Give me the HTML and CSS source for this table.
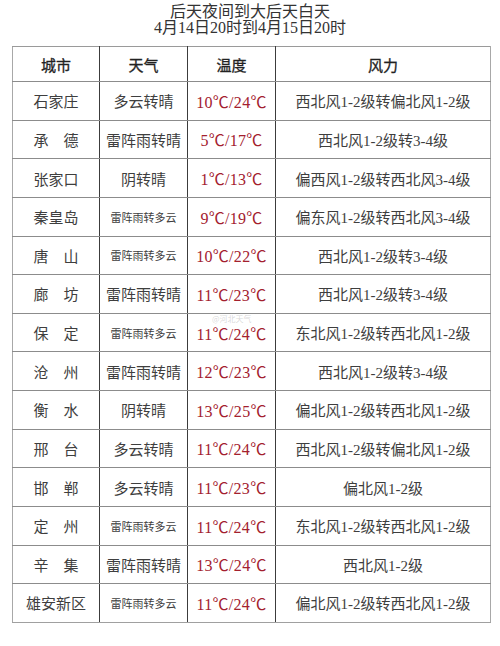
FILE: index.html
```html
<!DOCTYPE html>
<html lang="zh">
<head>
<meta charset="utf-8">
<title>后天夜间到大后天白天</title>
<link rel="stylesheet" href="styles.css">
</head>
<body>
<div class="page">
  <div class="title">
    <div>后天夜间到大后天白天</div>
    <div>4月14日20时到4月15日20时</div>
  </div>
  <div class="wrap">
    <table class="wx">
      <colgroup>
        <col class="c1"><col class="c2"><col class="c3"><col class="c4">
      </colgroup>
      <thead>
        <tr><th>城市</th><th>天气</th><th>温度</th><th>风力</th></tr>
      </thead>
      <tbody>
        <tr><td>石家庄</td><td>多云转晴</td><td class="t">10℃/24℃</td><td>西北风1-2级转偏北风1-2级</td></tr>
        <tr><td>承　德</td><td>雷阵雨转晴</td><td class="t">5℃/17℃</td><td>西北风1-2级转3-4级</td></tr>
        <tr><td>张家口</td><td>阴转晴</td><td class="t">1℃/13℃</td><td>偏西风1-2级转西北风3-4级</td></tr>
        <tr><td>秦皇岛</td><td class="s">雷阵雨转多云</td><td class="t">9℃/19℃</td><td>偏东风1-2级转西北风3-4级</td></tr>
        <tr><td>唐　山</td><td class="s">雷阵雨转多云</td><td class="t">10℃/22℃</td><td>西北风1-2级转3-4级</td></tr>
        <tr><td>廊　坊</td><td>雷阵雨转晴</td><td class="t">11℃/23℃</td><td>西北风1-2级转3-4级</td></tr>
        <tr><td>保　定</td><td class="s">雷阵雨转多云</td><td class="t">11℃/24℃</td><td>东北风1-2级转西北风1-2级</td></tr>
        <tr><td>沧　州</td><td>雷阵雨转晴</td><td class="t">12℃/23℃</td><td>西北风1-2级转3-4级</td></tr>
        <tr><td>衡　水</td><td>阴转晴</td><td class="t">13℃/25℃</td><td>偏北风1-2级转西北风1-2级</td></tr>
        <tr><td>邢　台</td><td>多云转晴</td><td class="t">11℃/24℃</td><td>西北风1-2级转偏北风1-2级</td></tr>
        <tr><td>邯　郸</td><td>多云转晴</td><td class="t">11℃/23℃</td><td>偏北风1-2级</td></tr>
        <tr><td>定　州</td><td class="s">雷阵雨转多云</td><td class="t">11℃/24℃</td><td>东北风1-2级转西北风1-2级</td></tr>
        <tr><td>辛　集</td><td>雷阵雨转晴</td><td class="t">13℃/24℃</td><td>西北风1-2级</td></tr>
        <tr><td>雄安新区</td><td class="s">雷阵雨转多云</td><td class="t">11℃/24℃</td><td>偏北风1-2级转西北风1-2级</td></tr>
      </tbody>
    </table>
    <div class="mark">@河北天气</div>
  </div>
</div>
</body>
</html>
```

FILE: styles.css
```css
html, body {
  margin: 0;
  padding: 0;
  background: #ffffff;
}
body {
  font-family: "Liberation Serif", "Noto Sans CJK SC", serif;
  color: #3e3e3e;
}
.page {
  width: 500px;
  padding-top: 4px;
}
.title {
  text-align: center;
  font-size: 16px;
  line-height: 16px;
  color: #333;
}
.wrap {
  position: relative;
  margin: 10px 10px 0 12px;
}
.wx {
  width: 478px;
  border-collapse: collapse;
  table-layout: fixed;
  border-left: 1px solid #a8a8a8;
  border-right: 1px solid #a8a8a8;
}
.c1 { width: 87px; }
.c2 { width: 88px; }
.c3 { width: 88px; }
.c4 { width: 215px; }
.wx th, .wx td {
  text-align: center;
  vertical-align: middle;
  padding: 0;
  border-top: 1px solid #8c8c8c;
  border-bottom: 1px solid #8c8c8c;
  border-left: 1px solid #3c3c3c;
  border-right: 1px solid #3c3c3c;
  white-space: nowrap;
}
.wx th:first-child, .wx td:first-child { border-left: 1px solid #a8a8a8; }
.wx th:last-child, .wx td:last-child { border-right: 1px solid #a8a8a8; }
.wx thead tr { height: 35px; }
.wx thead th {
  border-top: 1px solid #9a9a9a;
  font-weight: normal;
  font-size: 15px;
  color: #222;
  -webkit-text-stroke: 0.3px #222;
}
.wx tbody tr { height: 38.64px; }
.wx tbody tr:last-child td { border-bottom: 1px solid #a0a0a0; }
.wx td {
  font-size: 15px;
}
.wx td.s {
  font-size: 11px;
}
.wx td.t {
  color: #a3202e;
  font-size: 16px;
  letter-spacing: 0.3px;
}
.mark {
  position: absolute;
  left: 200px;
  top: 269px;
  font-family: "Noto Sans CJK SC", sans-serif;
  font-size: 8px;
  line-height: 8px;
  color: rgba(140, 140, 140, 0.35);
}
```
